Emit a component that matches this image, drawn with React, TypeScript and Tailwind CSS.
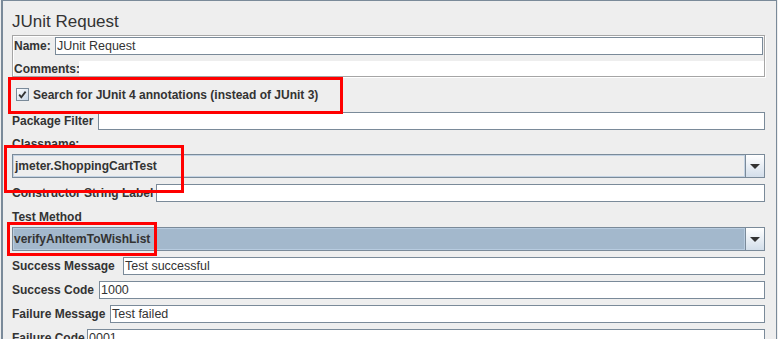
import React from "react";

function Field({ label, w, value, className = "" }: { label: string; w: string; value?: string; className?: string }) {
  return (
    <div className={`flex h-[18px] items-center ${className}`}>
      <div className={`${w} shrink-0 text-[12px] leading-[14px] font-bold whitespace-nowrap`}>{label}</div>
      <div className="flex h-full flex-1 items-center border border-[#7a8a99] bg-white pl-px text-[12.5px] leading-[14px] whitespace-nowrap">
        {value}
      </div>
    </div>
  );
}

function Arrow() {
  return (
    <div className="flex h-full w-[19px] shrink-0 items-center justify-center border-l border-[#7a8a99] bg-gradient-to-b from-white to-[#d3deea]">
      <svg width="10" height="5" viewBox="0 0 10 5">
        <polygon points="0,0 10,0 5,5" fill="#333333" />
      </svg>
    </div>
  );
}

export default function App() {
  return (
    <div className="relative h-[339px] w-[778px] overflow-hidden bg-[#eeeeee] font-['Liberation_Sans',Arial,sans-serif] text-[#333333]">
      <div className="ml-px h-[400px] w-[776px] border-t border-r border-l-2 border-[#7a8a99] pr-[11px] pl-[9px]">
        <div className="pt-[12px] text-[17px] leading-[17px] whitespace-nowrap">JUnit Request</div>

        <div className="mt-[5px] border border-[#a5a5a5] pt-px shadow-[inset_1px_1px_0_#ffffff,1px_1px_0_#ffffff]">
          <div className="flex h-[18px] items-center pr-px">
            <div className="w-[42px] shrink-0 pl-px text-[12px] leading-[14px] font-bold">Name:</div>
            <div className="flex h-full flex-1 items-center border border-[#7a8a99] bg-white pl-px text-[12.5px] leading-[14px]">
              JUnit Request
            </div>
          </div>
          <div className="mt-[6px] flex h-[15px] items-center">
            <div className="w-[66px] shrink-0 pl-px text-[12px] leading-[14px] font-bold">Comments:</div>
            <div className="h-full flex-1 bg-white" />
          </div>
        </div>

        <div className="flex h-[35px] items-center gap-[4px] pl-[4px]">
          <div className="flex h-[13px] w-[13px] items-center justify-center border border-[#7a8a99] bg-gradient-to-br from-white to-[#c8d6e6]">
            <svg width="11" height="11" viewBox="0 0 11 11">
              <path d="M2.2 5.6 L4.3 8.2 L8.6 2.6" fill="none" stroke="#333333" strokeWidth="1.8" strokeLinejoin="miter" />
            </svg>
          </div>
          <span className="text-[12px] leading-[14px] font-bold whitespace-nowrap">
            Search for JUnit 4 annotations (instead of JUnit 3)
          </span>
        </div>

        <Field label="Package Filter" w="w-[86px]" />

        <div className="mt-[7px] h-[14px] text-[12px] leading-[14px] font-bold">Classname:</div>
        <div className="mt-[3px] flex h-[24px] border border-[#7a8a99]">
          <div className="flex flex-1 items-center border border-[#c4d3e3] bg-[#eeeeee] pl-px text-[12px] leading-[14px] font-bold">
            jmeter.ShoppingCartTest
          </div>
          <Arrow />
        </div>

        <Field label="Constructor String Label" w="w-[144px]" className="mt-[6px]" />

        <div className="mt-[8px] h-[14px] text-[12px] leading-[14px] font-bold">Test Method</div>
        <div className="mt-[3px] flex h-[24px] border border-[#7a8a99]">
          <div className="flex flex-1 items-center border border-[#b8cce0] bg-[#a3b8cc] text-[12px] leading-[14px] font-bold">
            verifyAnItemToWishList
          </div>
          <Arrow />
        </div>

        <Field label="Success Message" w="w-[111px]" value="Test successful" className="mt-[6px]" />
        <Field label="Success Code" w="w-[87px]" value="1000" className="mt-[6px]" />
        <Field label="Failure Message" w="w-[98px]" value="Test failed" className="mt-[6px]" />
        <Field label="Failure Code" w="w-[75px]" value="0001" className="mt-[6px]" />
      </div>

      <div className="pointer-events-none absolute top-[77px] left-[8px] h-[37px] w-[335px] border-[3px] border-[#ff0000]" />
      <div className="pointer-events-none absolute top-[145px] left-[4px] h-[48px] w-[180px] border-[3px] border-[#ff0000]" />
      <div className="pointer-events-none absolute top-[222px] left-[7px] h-[34px] w-[150px] border-[3px] border-[#ff0000]" />
    </div>
  );
}
